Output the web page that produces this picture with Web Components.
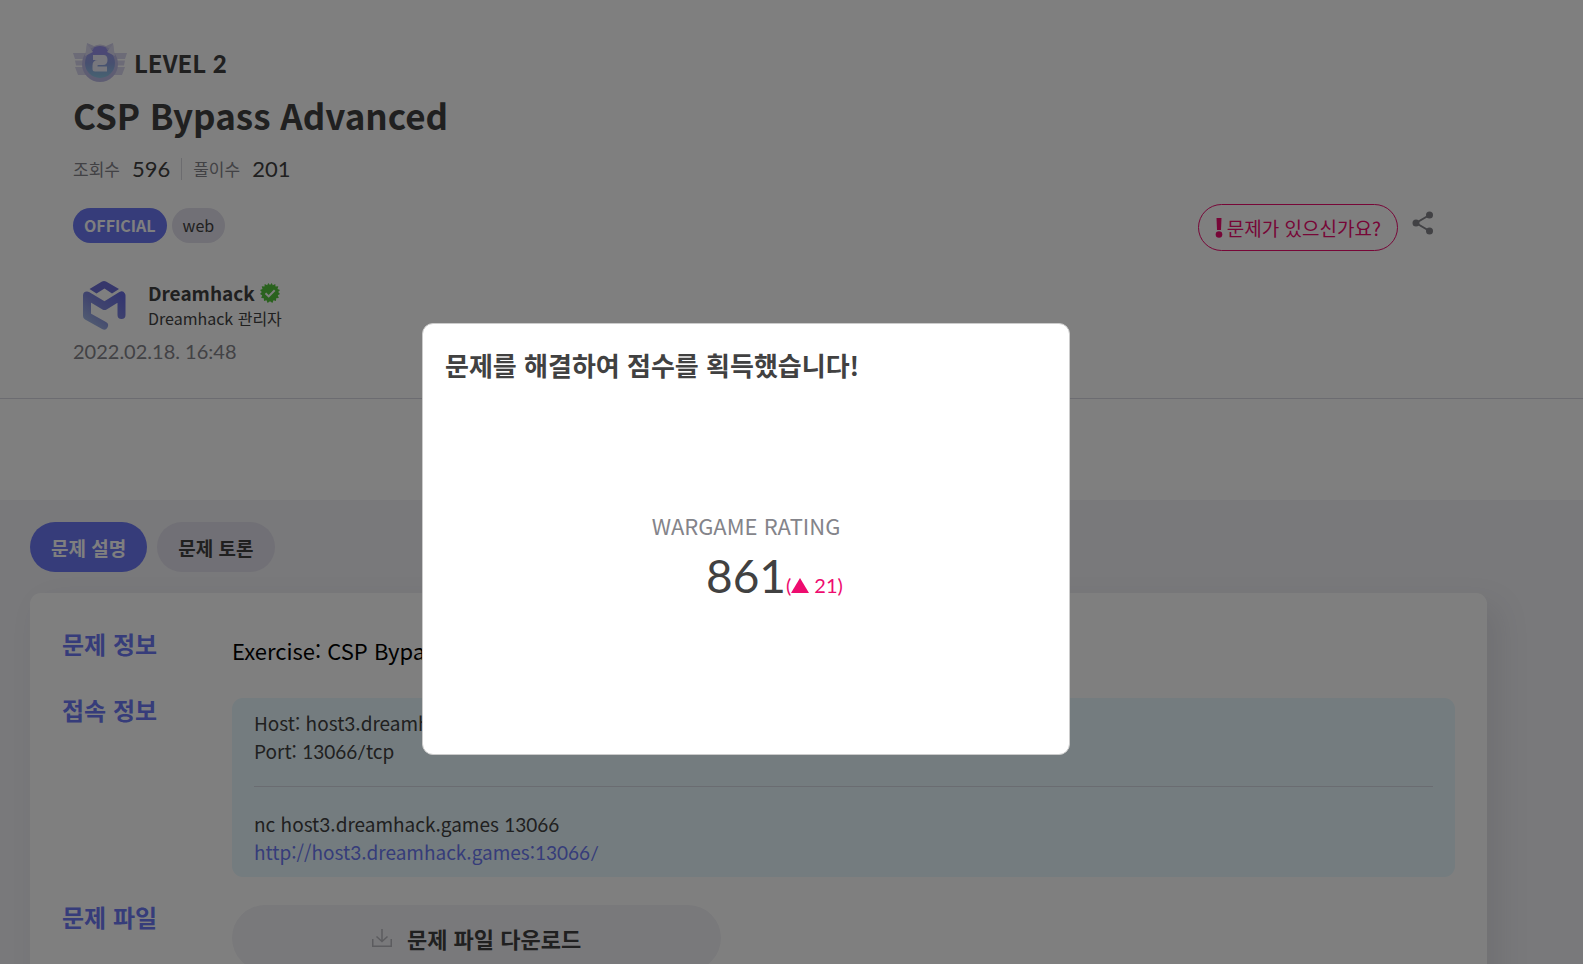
<!DOCTYPE html>
<html lang="ko">
<head>
<meta charset="utf-8">
<meta name="viewport" content="width=device-width, initial-scale=1">
<title>CSP Bypass Advanced</title>
<style>
html{--primary:#6c78f4;--ink:#414141;--muted:#84848a;--pink:#ee0c6f;--surface:#f2f2f6;--pill:#e2e0ec;--num:Lato,"Noto Sans CJK KR",sans-serif;height:100%}
body{margin:0;height:100%;overflow:hidden;font-family:"Noto Sans CJK KR",sans-serif;color:var(--ink);background:var(--surface)}
</style>
</head>
<body>
<dh-page></dh-page>
<script>
const define = (name, markup) => {
  const template = document.createElement('template');
  template.innerHTML = markup;
  customElements.define(name, class extends HTMLElement {
    constructor() {
      super();
      this.attachShadow({mode: 'open'}).append(template.content.cloneNode(true));
    }
  });
};

define('dh-level', `
<style>
:host{display:flex;align-items:center;gap:7px;height:40px;font-size:24px;line-height:36px;font-weight:700}
svg{display:block}
b{font-family:var(--num)}
</style>
<svg width="54" height="40" viewBox="0 0 54 40" aria-hidden="true">
<defs><linearGradient id="g" x1="0" y1="0" x2="0" y2="1"><stop offset="0" stop-color="#9c96e8"/><stop offset=".5" stop-color="#8f9fe0"/><stop offset="1" stop-color="#8fc6e4"/></linearGradient></defs>
<path fill="#d9d7ee" d="M0 10h13v6H2zM2 17.500h11v5H3zM2 24h12l2 8H5z M54 10H41v6h11zM52 17.500H41v5h10zM52 24H40l-2 8h11z"/>
<path fill="#d3d0ec" d="M14 0l7 3q6-3 12 0l7-3 1 11-28 0z"/>
<circle cx="27" cy="21" r="18" fill="#bdbbe6"/>
<circle cx="27" cy="20" r="15" fill="url(#g)"/>
<path fill="#9690ea" d="M21 4.500q6-3 12 0l3 7H18z"/>
<path fill="#dddbf0" d="M14 1l6 8-8 4zM40 1l-6 8 8 4z"/>
<path fill="none" stroke="#eeeffa" stroke-width="5" stroke-linejoin="round" d="M20 14.500h10.500q1.500 0 1.500 2.500t-2 2.500h-5q-3 0-3 3V26H34"/>
</svg>
<span>LEVEL <b>2</b></span>`);

define('dh-stats', `
<style>
:host{display:flex;align-items:center;font-size:17px;line-height:24px;color:var(--muted)}
b{font:inherit;font-family:var(--num);font-size:22px;color:var(--ink);margin-left:12px}
i{width:1px;height:22px;background:#d8d8de;margin:0 11px}
</style>
<span>조회수</span><b>596</b><i></i><span>풀이수</span><b>201</b>`);

define('dh-tag', `
<style>
:host{display:block;box-sizing:border-box;height:35px;padding:0 11px;border-radius:18px;font-size:16px;line-height:35px;background:var(--pill)}
:host([official]){background:var(--primary);color:#fff;font-weight:700}
</style><slot></slot>`);

define('dh-author', `
<style>
:host{display:flex;align-items:center;height:52px;gap:21px;padding-left:9px}
svg{display:block}
.n{display:flex;align-items:center;gap:5px;font-size:19px;line-height:27px}
.r{font-size:16px;line-height:25px}
</style>
<svg width="45" height="52" viewBox="0 0 45 52" aria-hidden="true">
<defs><linearGradient id="a" x1="1" y1="0" x2="0" y2="1"><stop offset="0" stop-color="#686ce0"/><stop offset=".5" stop-color="#8088dc"/><stop offset="1" stop-color="#a6bce4"/></linearGradient></defs>
<path fill="none" stroke="url(#a)" stroke-width="8" stroke-linejoin="round" stroke-linecap="round" d="M22 46.500L5 37V16.500L22.500 27 39.500 16.500V36"/>
<path fill="#6c6fd6" d="M7.500 10L20 2.500q2-1.200 4 0L37 10l-7 4.500-7.500-5-8 5z"/>
</svg>
<div><div class="n"><strong>Dreamhack</strong>
<svg width="20" height="20" viewBox="0 0 20 20" aria-label="verified"><path fill="#55c53c" d="M10 2L11.800 0 12.800 2.300 15.300 1 15.500 3.600 18.300 3.300 17.500 6 20 7 18.200 9 20 11 17.800 12.200 18.800 15 16.200 15.300 16 18 13.500 17.200 12.400 20 10 18.300 7.600 20 6.500 17.200 4 18 3.800 15.300 1.200 15 2.200 12.200 0 11 1.800 9 0 7 2.500 6 1.700 3.300 4.500 3.600 4.700 1 7.200 2.300 8.200 0z"/><path fill="none" stroke="#fff" stroke-width="2" d="M5.500 10.200l3.200 3.200 6-6.200"/></svg></div>
<div class="r">Dreamhack 관리자</div></div>`);

define('dh-header', `
<style>
:host{display:block;background:#fff;height:500px}
header{box-sizing:border-box;height:399px;padding:43px 149px 0 73px;border-bottom:1px solid #d8d8e2}
h1{margin:5px 0 0;font-size:35px;line-height:54px;font-weight:700}
dh-stats{margin-top:15px}
.row{display:flex;justify-content:space-between;align-items:flex-start;margin-top:23px}
.tags{display:flex;gap:5px;padding-top:4px}
.actions{display:flex;gap:14px}
.help{box-sizing:border-box;height:47px;padding:0 16px;border:1px solid var(--pink);border-radius:24px;background:none;color:var(--pink);font:inherit;font-size:19px;line-height:27px;display:flex;align-items:center;gap:4px}
.share{border:0;background:none;padding:6px 0 0;height:32px}
svg{display:block}
dh-author{margin-top:28px}
time{display:block;font-family:var(--num);font-size:20px;line-height:28px;color:var(--muted);margin-top:6px}
</style>
<header>
<dh-level></dh-level>
<h1>CSP Bypass Advanced</h1>
<dh-stats></dh-stats>
<div class="row"><div class="tags"><dh-tag official>OFFICIAL</dh-tag><dh-tag>web</dh-tag></div>
<div class="actions"><button class="help"><svg width="8" height="20" viewBox="0 0 8 20" aria-hidden="true"><path fill="currentColor" d="M1.500 0h5L6 12H2z"/><circle cx="4" cy="16.500" r="3.300" fill="currentColor"/></svg><span>문제가 있으신가요?</span></button>
<button class="share" aria-label="share"><svg width="22" height="24" viewBox="0 0 22 24"><g fill="#84848a"><circle cx="4" cy="12" r="3.500"/><circle cx="17.500" cy="4" r="3.500"/><circle cx="17.500" cy="20" r="3.500"/></g><path fill="none" stroke="#84848a" stroke-width="2" d="M17.500 4L4 12l13.500 8"/></svg></button></div></div>
<dh-author></dh-author>
<time datetime="2022-02-18T16:48">2022.02.18. 16:48</time>
</header>`);

define('dh-tabs', `
<style>
:host{display:flex;gap:10px}
button{border:0;box-sizing:border-box;height:50px;padding:0 21px;border-radius:25px;background:var(--pill);color:var(--ink);font:700 19px/27px "Noto Sans CJK KR",sans-serif}
button.on{background:var(--primary);color:#fff}
</style>
<button class="on">문제 설명</button><button>문제 토론</button>`);

define('dh-field', `
<style>
:host{display:grid;grid-template-columns:170px minmax(0,1fr);align-items:start}
h2{margin:0;font-size:24px;line-height:36px;font-weight:700;color:var(--primary)}
</style>
<h2><slot name="label"></slot></h2><slot></slot>`);

define('dh-connection', `
<style>
:host{display:block;box-sizing:border-box;padding:11px 22px;border-radius:11px;background:#e8f8fe;font-size:19px;line-height:28px}
p{margin:0;height:28px}
b{font-family:var(--num);font-weight:inherit}
hr{border:0;border-top:1px solid #d4d8e2;margin:21px 0 23px}
a{color:var(--primary);text-decoration:none}
</style>
<p>Host: host<b>3</b>.dreamhack.games</p><p>Port: <b>13066/</b>tcp</p>
<hr>
<p>nc host<b>3</b>.dreamhack.games <b>13066</b></p><p><a href="http://host3.dreamhack.games:13066/">http://host<b>3</b>.dreamhack.games:<b>13066/</b></a></p>`);

define('dh-download', `
<style>
:host{display:block}
button{box-sizing:border-box;width:40%;height:66px;border:0;border-radius:33px;background:var(--surface);color:var(--ink);font:700 22px/32px "Noto Sans CJK KR",sans-serif;display:flex;align-items:center;justify-content:center;gap:15px}
svg{display:block}
</style>
<button><svg width="20" height="18" viewBox="0 0 20 18" fill="none" stroke="#b8b8be" stroke-width="1.500" aria-hidden="true"><path d="M.75 10v7.250h18.500V10M10 0v12.500M4.500 7.500l5.500 5 5.500-5"/></svg><span>문제 파일 다운로드</span></button>`);

define('dh-details', `
<style>
:host{display:block;padding:22px 96px 0 30px}
section{margin-top:21px;padding:33px 32px 40px;background:#fff;border-radius:11px;box-shadow:12px 12px 32px rgba(60,60,80,.1)}
.intro{margin:6px 0 0;font-size:22px;line-height:36px;color:#000}
.a{height:66px}.b{margin-bottom:22px}
dh-connection,dh-download{margin-top:6px}
</style>
<dh-tabs></dh-tabs>
<section>
<dh-field class="a"><span slot="label">문제 정보</span><p class="intro">Exercise: CSP Bypass Advanced의 패치된 문제입니다.</p></dh-field>
<dh-field class="b"><span slot="label">접속 정보</span><dh-connection></dh-connection></dh-field>
<dh-field><span slot="label">문제 파일</span><dh-download></dh-download></dh-field>
</section>`);

define('dh-result', `
<style>
:host{position:fixed;inset:0;box-sizing:border-box;display:flex;align-items:center;justify-content:center;padding:114px 91px 0 0;background:rgba(0,0,0,.5)}
[role=dialog]{box-sizing:border-box;width:648px;height:432px;padding:21px 22px;display:flex;flex-direction:column;background:#fff;border:1px solid #ccc;border-radius:11px}
h2{margin:0;font-size:26px;line-height:40px;font-weight:700}
.body{flex:1;display:flex;flex-direction:column;align-items:center;padding-top:124px}
.k{font-size:22px;line-height:32px;color:var(--muted)}
.v{display:grid;grid-template-columns:1fr auto 1fr;align-items:baseline;margin-top:7px;font-family:var(--num);font-size:46px;line-height:56px}
.v span:first-of-type{grid-column:2}
.d{display:flex;align-items:baseline;font-size:20px;color:var(--pink);line-height:28px}
svg{margin-right:5px}
</style>
<div role="dialog" aria-modal="true" aria-labelledby="t">
<h2 id="t">문제를 해결하여 점수를 획득했습니다!</h2>
<div class="body"><div class="k">WARGAME RATING</div>
<div class="v"><span>861</span><span class="d">(<svg width="18" height="15" viewBox="0 0 18 15" aria-label="up"><path fill="currentColor" d="M9 0l9 15H0z"/></svg>21)</span></div></div>
</div>`);

define('dh-page', `
<style>:host{display:block;height:100%;overflow:hidden}</style>
<dh-header></dh-header><dh-details></dh-details><dh-result></dh-result>`);
</script>
</body>
</html>
